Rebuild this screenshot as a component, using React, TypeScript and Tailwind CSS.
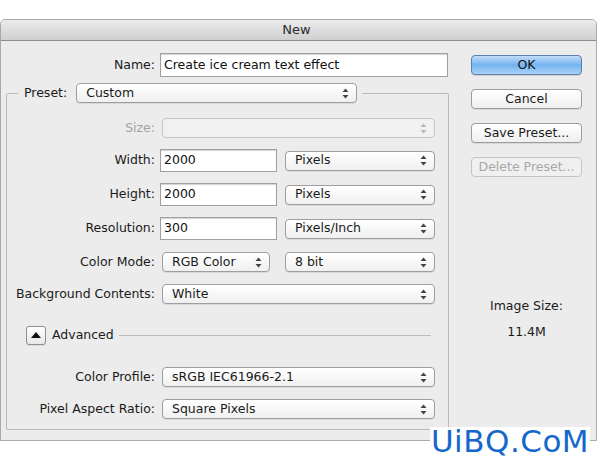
import { FC, ReactNode } from 'react';

const Arrows: FC<{ disabled?: boolean }> = ({ disabled }) => (
  <svg width="7" height="11" viewBox="0 0 7 11" className="shrink-0">
    <path d="M3.5 0.5 L6.5 4 L0.5 4 Z" fill={disabled ? '#b8b8b8' : '#444'} />
    <path d="M3.5 10.5 L6.5 7 L0.5 7 Z" fill={disabled ? '#b8b8b8' : '#444'} />
  </svg>
);

const Popup: FC<{ value?: string; className: string; disabled?: boolean }> = ({
  value,
  className,
  disabled,
}) => (
  <div
    className={`h-[20px] flex items-center justify-between pl-[9px] pr-[7px] rounded-[4px] border ${
      disabled
        ? 'border-[#c6c6c6] bg-[#f1f1f1] text-[#a6a6a6]'
        : 'border-[#9e9e9e] bg-gradient-to-b from-white to-[#f0f0f0] text-[#1a1a1a] shadow-[0_1px_0_rgba(0,0,0,0.08)]'
    } ${className}`}
  >
    <span className="leading-none">{value}</span>
    <Arrows disabled={disabled} />
  </div>
);

const Field: FC<{ value: string; className: string }> = ({ value, className }) => (
  <div
    className={`h-[23px] flex items-center px-[3px] bg-white border border-[#a0a0a0] shadow-[inset_0_1px_1px_rgba(0,0,0,0.18)] text-[#111] ${className}`}
  >
    {value}
  </div>
);

const Row: FC<{ label: string; h: string; dim?: boolean; children: ReactNode }> = ({
  label,
  h,
  dim,
  children,
}) => (
  <div className={`flex items-center ${h}`}>
    <div className={`w-[148px] text-right ${dim ? 'text-[#a3a3a3]' : 'text-[#1a1a1a]'}`}>
      {label}
    </div>
    <div className="ml-[5px] flex items-center">{children}</div>
  </div>
);

const Btn: FC<{ children: ReactNode; primary?: boolean; disabled?: boolean }> = ({
  children,
  primary,
  disabled,
}) => (
  <div
    className={`w-[111px] h-[20px] flex items-center justify-center rounded-[4px] border ${
      primary
        ? 'border-[#5a7fb0] bg-gradient-to-b from-[#c2ddf8] via-[#74b3f0] to-[#a9d2f8] text-[#111] shadow-[0_1px_0_rgba(0,0,0,0.12)]'
        : disabled
        ? 'border-[#c4c4c4] bg-[#f0f0f0] text-[#a8a8a8]'
        : 'border-[#9c9c9c] bg-gradient-to-b from-white to-[#efefef] text-[#1a1a1a] shadow-[0_1px_0_rgba(0,0,0,0.08)]'
    }`}
  >
    {children}
  </div>
);

export default function App() {
  return (
    <div className="relative w-[600px] h-[467px] bg-white overflow-hidden font-['DejaVu_Sans',sans-serif] text-[12.5px]">
      <div className="mt-[19px] w-[597px] h-[422px] bg-[#ececec] border border-[#a9a9a9] rounded-t-[5px] overflow-hidden flex flex-col">
        <div className="h-[21px] shrink-0 border-b border-[#8c8c8c] bg-gradient-to-b from-[#ececec] to-[#cfcfcf] flex items-center justify-center text-[#2a2a2a] text-[13px]">
          <span className="ml-[-4px]">New</span>
        </div>

        <div className="flex">
          {/* left: form */}
          <div className="ml-[5px] w-[443px]">
            <div className="mt-[12px] flex items-center">
              <div className="w-[149px] text-right text-[#1a1a1a]">Name:</div>
              <Field value="Create ice cream text effect" className="ml-[5px] w-[288px] h-[24px]" />
            </div>

            <fieldset className="mt-[6px] border border-[#b9b9b9] rounded-[2px] pb-[5px]">
              <legend className="ml-[11px] px-[6px] pr-[5px] flex items-center h-[20px]">
                <span className="text-[#1a1a1a]">Preset:</span>
                <Popup value="Custom" className="ml-[9px] w-[281px]" />
              </legend>

              <div className="pt-[10px]">
                <Row label="Size:" h="h-[30px]" dim>
                  <Popup className="ml-[2px] w-[273px]" disabled />
                </Row>
                <Row label="Width:" h="h-[35px]">
                  <Field value="2000" className="w-[117px]" />
                  <Popup value="Pixels" className="ml-[8px] w-[150px]" />
                </Row>
                <Row label="Height:" h="h-[33px]">
                  <Field value="2000" className="w-[117px]" />
                  <Popup value="Pixels" className="ml-[8px] w-[150px]" />
                </Row>
                <Row label="Resolution:" h="h-[35px]">
                  <Field value="300" className="w-[117px]" />
                  <Popup value="Pixels/Inch" className="ml-[8px] w-[150px]" />
                </Row>
                <Row label="Color Mode:" h="h-[32px]">
                  <Popup value="RGB Color" className="ml-[2px] w-[108px]" />
                  <Popup value="8 bit" className="ml-[15px] w-[150px]" />
                </Row>
                <Row label="Background Contents:" h="h-[32px]">
                  <Popup value="White" className="ml-[2px] w-[273px]" />
                </Row>

                <div className="h-[50px] flex items-center">
                  <div className="ml-[19px] w-[20px] h-[19px] rounded-[3px] border border-[#8e8e8e] bg-gradient-to-b from-white to-[#e9e9e9] flex items-center justify-center shadow-[0_1px_0_rgba(0,0,0,0.08)]">
                    <svg width="10" height="6" viewBox="0 0 10 6">
                      <path d="M5 0 L10 6 L0 6 Z" fill="#111" />
                    </svg>
                  </div>
                  <span className="ml-[6px] text-[#1a1a1a]">Advanced</span>
                  <div className="ml-[5px] mr-[17px] flex-1 h-px bg-[#bdbdbd]" />
                </div>

                <Row label="Color Profile:" h="h-[34px]">
                  <Popup value="sRGB IEC61966-2.1" className="ml-[2px] w-[273px]" />
                </Row>
                <Row label="Pixel Aspect Ratio:" h="h-[30px]">
                  <Popup value="Square Pixels" className="ml-[2px] w-[273px]" />
                </Row>
              </div>
            </fieldset>
          </div>

          {/* right: buttons */}
          <div className="ml-[22px] w-[111px] pt-[14px] flex flex-col gap-[14px]">
            <Btn primary>OK</Btn>
            <Btn>Cancel</Btn>
            <Btn>Save Preset...</Btn>
            <Btn disabled>Delete Preset...</Btn>
            <div className="mt-[106px] flex flex-col items-center text-[#1a1a1a]">
              <span>Image Size:</span>
              <span className="mt-[7px]">11.4M</span>
            </div>
          </div>
        </div>
      </div>

      {/* site watermark */}
      <div className="absolute left-[430px] top-[427px] w-[160px] h-[28px] bg-white flex items-center justify-center">
        <span className="text-[#1468cc] text-[31px] leading-none tracking-[0.5px] font-['DejaVu_Sans',sans-serif]">
          UiBQ.CoM
        </span>
      </div>
    </div>
  );
}
